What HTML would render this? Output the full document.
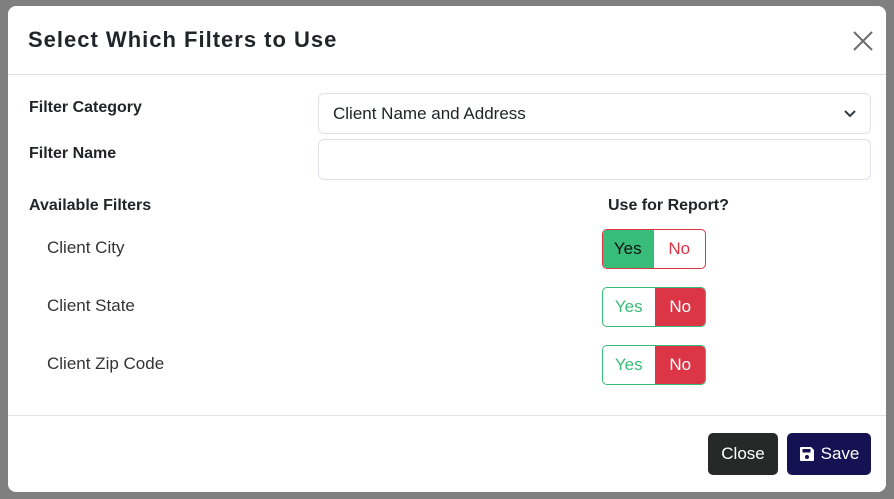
<!DOCTYPE html>
<html><head><meta charset="utf-8"><style>
*{box-sizing:border-box;margin:0;padding:0}
body{width:894px;height:499px;background:#7f7f7f;font-family:"Liberation Sans",sans-serif;position:relative;overflow:hidden;color:#212529}
.m{position:absolute;left:8px;top:6px;width:878px;height:486px;background:#fff;border-radius:8px}
.t{position:absolute;left:20px;top:21px;font-size:22px;font-weight:bold;letter-spacing:1px}
.hl{position:absolute;left:0;right:0;top:68px;border-top:1px solid #dee2e6}
.fl{position:absolute;left:0;right:0;top:409px;border-top:1px solid #dee2e6}
.x{position:absolute;left:844px;top:24px}
.lb{position:absolute;font-size:16px;font-weight:bold}
.tx{position:absolute;font-size:17px;color:#333}
.in{position:absolute;left:310px;width:553px;height:41px;border:1px solid #dee2e6;border-radius:6px;font-size:17px;padding:10px 14px;color:#212529}
.tg{position:absolute;left:594px;width:104px;height:40px;display:flex;border-radius:5px;overflow:hidden;font-size:17px}
.tg div{flex:1;display:flex;align-items:center;justify-content:center}
.b{position:absolute;top:427px;height:42px;border-radius:5px;color:#fff;font-size:17px;display:flex;align-items:center;justify-content:center}
</style></head><body>
<div class="m">
<div class="t">Select Which Filters to Use</div>
<svg class="x" width="22" height="22" viewBox="0 0 22 22"><path d="M2 2L20 20M20 2L2 20" stroke="#6c6c6c" stroke-width="2"/></svg>
<div class="hl"></div>
<div class="lb" style="left:21px;top:93px">Filter Category</div>
<div class="in" style="top:87px">Client Name and Address<svg style="position:absolute;right:14px;top:16px" width="12" height="8" viewBox="0 0 12 8"><path d="M1 1L6 6L11 1" stroke="#343a40" stroke-width="2" fill="none"/></svg></div>
<div class="lb" style="left:21px;top:139px">Filter Name</div>
<div class="in" style="top:133px"></div>
<div class="lb" style="left:21px;top:191px">Available Filters</div>
<div class="lb" style="left:600px;top:191px">Use for Report?</div>
<div class="tx" style="left:39px;top:232px">Client City</div>
<div class="tx" style="left:39px;top:290px">Client State</div>
<div class="tx" style="left:39px;top:348px">Client Zip Code</div>
<div class="tg" style="top:223px;border:1px solid #dc3545"><div style="background:#37bc79;color:#111;margin:-1px 0 -1px -1px">Yes</div><div style="color:#dc3545">No</div></div>
<div class="tg" style="top:281px;border:1px solid #37bc79"><div style="color:#37bc79">Yes</div><div style="background:#dc3545;color:#fff;margin:-1px -1px -1px 0">No</div></div>
<div class="tg" style="top:339px;border:1px solid #37bc79"><div style="color:#37bc79">Yes</div><div style="background:#dc3545;color:#fff;margin:-1px -1px -1px 0">No</div></div>
<div class="fl"></div>
<div class="b" style="left:700px;width:70px;background:#262928">Close</div>
<div class="b" style="left:779px;width:84px;background:#141253"><svg width="16" height="16" viewBox="0 0 16 16" style="margin-right:6px"><path d="M2 1h10l3 3v10a1 1 0 0 1-1 1H2a1 1 0 0 1-1-1V2a1 1 0 0 1 1-1z" fill="#fff"/><rect x="3.5" y="3" width="8" height="3.5" fill="#141253"/><circle cx="8" cy="11" r="2" fill="#141253"/></svg>Save</div>
</div>
</body></html>
